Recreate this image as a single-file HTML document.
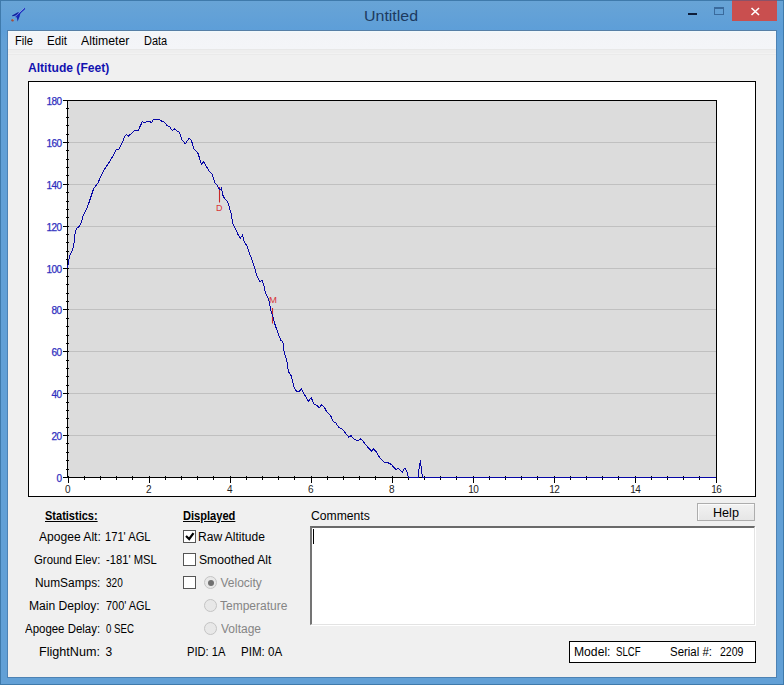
<!DOCTYPE html>
<html><head><meta charset="utf-8">
<style>
*{box-sizing:border-box;margin:0;padding:0}
html,body{width:784px;height:685px;overflow:hidden;background:#62a0d6;font-family:"Liberation Sans", sans-serif;font-size:12px;color:#000}
.a{position:absolute;white-space:nowrap;line-height:15px}
#frame{position:absolute;left:0;top:0;width:784px;height:685px;border:1px solid #3f7aab;background:linear-gradient(#68a4d6,#5d9ed8 30px,#62a0d6 40px)}
#client{position:absolute;left:7px;top:30px;width:770px;height:648px;border:1px solid #4d82b4;border-top-color:#577fa6;background:#f0f0f0}
#menu{position:absolute;left:8px;top:31px;width:768px;height:19px;background:linear-gradient(#f0fafe 0px,#f3f4f7 2px,#f4f5f8);border-bottom:1px solid #e8e8e8}
.cb{position:absolute;width:13px;height:13px;border:1px solid #555;background:#fff}
.rb{position:absolute;width:13px;height:13px;border:1px solid #c4c4c4;border-radius:50%;background:#e8e8e8}
</style></head><body>
<div id="frame"></div>
<svg style="position:absolute;left:0;top:0" width="40" height="30" viewBox="0 0 40 30">
 <path d="M12 15.4 L18.4 12 L19 13.4 L16 15.4 L12.4 16.2 Z" fill="#0e1e9c"/>
 <path d="M18.2 13.8 L20.4 13 L19.6 16.6 L17.6 21.6 L16.8 17.2 Z" fill="#1426b4"/>
 <path d="M24.4 7.8 L25.2 9 L16 17.6 L14.8 16.6 Z" fill="#1a2cc0"/>
 <line x1="24" y1="8.2" x2="14.9" y2="16.8" stroke="#d8ecff" stroke-width="0.6" opacity="0.8"/>
 <circle cx="12.6" cy="20.3" r="1.2" fill="#9c4636"/>
 <circle cx="13.1" cy="19.8" r="0.5" fill="#f4c8a8"/>
</svg>
<div style="position:absolute;left:688px;top:13px;width:9px;height:2px;background:#0e1e3a"></div>
<div style="position:absolute;left:714px;top:7px;width:10px;height:8px;border:1px solid #3a6a9c;border-top-width:2px"></div>
<div style="position:absolute;left:732px;top:0px;width:45px;height:21px;background:#c94f4f;border-top:1px solid #8a5268"></div>
<svg style="position:absolute;left:732px;top:0" width="45" height="21"><path d="M19.5 8 L27 15 M27 8 L19.5 15" stroke="#fff" stroke-width="1.6"/></svg>
<div id="client"></div>
<div id="menu"></div>
<div style="position:absolute;left:8px;top:50px;width:768px;height:5px;background:linear-gradient(#eeeeee 0,#eeeeee 3px,#f2f2f2 3px,#f2f2f2 4px,#eaeaea 4px)"></div>
<div style="position:absolute;left:28px;top:81px;width:728px;height:416px;border:1px solid #000;background:#fff"></div>
<svg style="position:absolute;left:0;top:0" width="784" height="685" font-family="Liberation Sans, sans-serif">
<rect x="68" y="101" width="648" height="376" fill="#dcdcdc"/>
<line x1="68" x2="716" y1="142.5" y2="142.5" stroke="#c0c0c0" stroke-width="1"/>
<line x1="68" x2="716" y1="184.5" y2="184.5" stroke="#c0c0c0" stroke-width="1"/>
<line x1="68" x2="716" y1="226.5" y2="226.5" stroke="#c0c0c0" stroke-width="1"/>
<line x1="68" x2="716" y1="268.5" y2="268.5" stroke="#c0c0c0" stroke-width="1"/>
<line x1="68" x2="716" y1="309.5" y2="309.5" stroke="#c0c0c0" stroke-width="1"/>
<line x1="68" x2="716" y1="351.5" y2="351.5" stroke="#c0c0c0" stroke-width="1"/>
<line x1="68" x2="716" y1="393.5" y2="393.5" stroke="#c0c0c0" stroke-width="1"/>
<line x1="68" x2="716" y1="435.5" y2="435.5" stroke="#c0c0c0" stroke-width="1"/>
<path d="M67 100.5 H717 M716.5 100 V483 M67.5 100 V478 M63 477.5 H717 M63 477.5 H69 M66 469.5 H69 M66 460.5 H69 M66 452.5 H69 M66 443.5 H69 M63 435.5 H69 M66 427.5 H69 M66 418.5 H69 M66 410.5 H69 M66 402.5 H69 M63 393.5 H69 M66 385.5 H69 M66 376.5 H69 M66 368.5 H69 M66 360.5 H69 M63 351.5 H69 M66 343.5 H69 M66 335.5 H69 M66 326.5 H69 M66 318.5 H69 M63 309.5 H69 M66 301.5 H69 M66 293.5 H69 M66 284.5 H69 M66 276.5 H69 M63 268.5 H69 M66 259.5 H69 M66 251.5 H69 M66 242.5 H69 M66 234.5 H69 M63 226.5 H69 M66 217.5 H69 M66 209.5 H69 M66 201.5 H69 M66 192.5 H69 M63 184.5 H69 M66 175.5 H69 M66 167.5 H69 M66 159.5 H69 M66 150.5 H69 M63 142.5 H69 M66 134.5 H69 M66 125.5 H69 M66 117.5 H69 M66 108.5 H69 M63 100.5 H69 M68.5 476 V483 M84.5 476 V480 M100.5 476 V480 M116.5 476 V480 M132.5 476 V480 M149.5 476 V483 M165.5 476 V480 M181.5 476 V480 M197.5 476 V480 M213.5 476 V480 M230.5 476 V483 M246.5 476 V480 M262.5 476 V480 M278.5 476 V480 M294.5 476 V480 M311.5 476 V483 M327.5 476 V480 M343.5 476 V480 M359.5 476 V480 M375.5 476 V480 M392.5 476 V483 M408.5 476 V480 M424.5 476 V480 M440.5 476 V480 M456.5 476 V480 M473.5 476 V483 M489.5 476 V480 M505.5 476 V480 M521.5 476 V480 M537.5 476 V480 M554.5 476 V483 M570.5 476 V480 M586.5 476 V480 M602.5 476 V480 M618.5 476 V480 M635.5 476 V483 M651.5 476 V480 M667.5 476 V480 M683.5 476 V480 M699.5 476 V480 M716.5 476 V483" stroke="#000" stroke-width="1" fill="none"/>
<text x="61.6" y="482.0" text-anchor="end" font-size="10" fill="#3030c0" stroke="#3030c0" stroke-width="0.25" letter-spacing="-0.55">0</text>
<text x="61.6" y="440.0" text-anchor="end" font-size="10" fill="#3030c0" stroke="#3030c0" stroke-width="0.25" letter-spacing="-0.55">20</text>
<text x="61.6" y="398.0" text-anchor="end" font-size="10" fill="#3030c0" stroke="#3030c0" stroke-width="0.25" letter-spacing="-0.55">40</text>
<text x="61.6" y="356.0" text-anchor="end" font-size="10" fill="#3030c0" stroke="#3030c0" stroke-width="0.25" letter-spacing="-0.55">60</text>
<text x="61.6" y="314.0" text-anchor="end" font-size="10" fill="#3030c0" stroke="#3030c0" stroke-width="0.25" letter-spacing="-0.55">80</text>
<text x="61.6" y="273.0" text-anchor="end" font-size="10" fill="#3030c0" stroke="#3030c0" stroke-width="0.25" letter-spacing="-0.55">100</text>
<text x="61.6" y="231.0" text-anchor="end" font-size="10" fill="#3030c0" stroke="#3030c0" stroke-width="0.25" letter-spacing="-0.55">120</text>
<text x="61.6" y="189.0" text-anchor="end" font-size="10" fill="#3030c0" stroke="#3030c0" stroke-width="0.25" letter-spacing="-0.55">140</text>
<text x="61.6" y="147.0" text-anchor="end" font-size="10" fill="#3030c0" stroke="#3030c0" stroke-width="0.25" letter-spacing="-0.55">160</text>
<text x="61.6" y="105.0" text-anchor="end" font-size="10" fill="#3030c0" stroke="#3030c0" stroke-width="0.25" letter-spacing="-0.55">180</text>
<text x="67.4" y="493" text-anchor="middle" font-size="10" fill="#222" letter-spacing="-0.55">0</text>
<text x="148.4" y="493" text-anchor="middle" font-size="10" fill="#222" letter-spacing="-0.55">2</text>
<text x="229.4" y="493" text-anchor="middle" font-size="10" fill="#222" letter-spacing="-0.55">4</text>
<text x="310.4" y="493" text-anchor="middle" font-size="10" fill="#222" letter-spacing="-0.55">6</text>
<text x="391.4" y="493" text-anchor="middle" font-size="10" fill="#222" letter-spacing="-0.55">8</text>
<text x="473.2" y="493" text-anchor="middle" font-size="10" fill="#222" letter-spacing="-0.55">10</text>
<text x="554.2" y="493" text-anchor="middle" font-size="10" fill="#222" letter-spacing="-0.55">12</text>
<text x="635.2" y="493" text-anchor="middle" font-size="10" fill="#222" letter-spacing="-0.55">14</text>
<text x="716.2" y="493" text-anchor="middle" font-size="10" fill="#222" letter-spacing="-0.55">16</text>
<line x1="219.5" x2="219.5" y1="187" y2="202.5" stroke="#c82828" stroke-width="1.1"/>
<text x="219.2" y="211.2" text-anchor="middle" font-size="9" fill="#d83636">D</text>
<line x1="272.5" x2="272.5" y1="308" y2="323.5" stroke="#c82828" stroke-width="1.1"/>
<text x="273" y="302.6" text-anchor="middle" font-size="9.5" fill="#d83636">M</text>
<polyline points="67.6,267.6 69,258.8 70.2,254.5 72.4,250 73.9,244.2 75.3,231.1 76.8,228.2 79,226.7 81.2,223 83.4,215 85.5,210.7 87.7,206.3 90.7,197.5 93.6,188.8 95.8,185.8 97.9,183 100.3,177.7 104.3,169.6 109,162.6 112.5,156.7 116,149.7 118.9,149.1 123,141 124.8,136.3 126.3,134.5 128.3,136.3 134.7,130.4 138.4,130.1 142.3,121.7 144.6,122.8 147,121.3 149.3,121.3 151.6,122.8 153.4,119.6 158.6,119.3 161.6,121.1 163.9,121.7 167.4,125.8 169.7,126.9 172.1,130.4 175,128.8 177,131.1 179.3,132.3 181.7,139.3 185.2,143.9 189.3,138.1 191.6,141 193.9,149.2 196.3,151.5 198,153.3 201.5,164.4 203.3,161.5 205.6,165 209.7,172 212,173.7 215,183.1 217.5,185.8 218.7,188.2 220.1,190.2 221.6,188.2 222.8,195.2 223.9,197.5 227.4,201.6 229.2,206.9 231.5,215 232.6,223 235.5,228.9 238.4,235.3 240.2,238.2 242.5,235.3 244.3,241.7 247.2,246.4 249.5,253.4 253,262.7 257,275.8 259.9,281.7 262.3,280.5 264,286.4 265.2,292.2 268.7,299.2 270.4,308.5 272.8,316.7 275.1,324.9 278,333.1 281,340.7 282.7,341.2 284.3,352.8 286.7,359.9 288.4,371.5 291.4,376.2 294.3,387.9 296.6,391.4 299,391.4 301.3,389.1 303.6,393.1 308.3,401.3 311.2,397.8 314.1,404.2 317,405.4 319.4,407.7 321.7,404.8 324.6,407.7 326.4,411.2 330.7,415.9 333.3,421.7 335.8,423 339,427.4 341.6,428.7 344.1,431.3 348.6,437 351.1,435.7 353.7,438.9 357.5,440.8 360.7,438.9 363.3,441.5 367.7,447.2 371.6,451 373.5,449.1 376.7,452.3 379.8,458 383.7,461.9 387.5,462.5 391.3,464.4 395.8,469.5 398.3,468.2 402.2,472.1 404.7,468.2 406.6,470.8 408.5,477.2 418.4,477.2 418.4,473.4 420.4,460.2 421.9,473.4 422.4,477.2 715.5,477.2" fill="none" stroke="#0606a6" stroke-width="1" stroke-linejoin="miter" shape-rendering="crispEdges"/>
</svg>
<div class="cb" style="left:183px;top:530px"></div>
<svg style="position:absolute;left:183px;top:530px" width="13" height="13"><path d="M3 6 L6.2 9 L10.5 3.2" fill="none" stroke="#000" stroke-width="2.2"/></svg>
<div class="cb" style="left:183px;top:553px"></div>
<div class="cb" style="left:183px;top:576px"></div>
<div class="rb" style="left:204px;top:576px"></div>
<div style="position:absolute;left:207.5px;top:579.5px;width:6px;height:6px;border-radius:50%;background:#707070"></div>
<div class="rb" style="left:204px;top:599px"></div>
<div class="rb" style="left:204px;top:622px"></div>
<div style="position:absolute;left:310px;top:526px;width:445px;height:99px;border-top:2px solid #6a6a6a;border-left:2px solid #747474;border-right:1px solid #e3e3e3;border-bottom:1px solid #e3e3e3;background:#fff;box-shadow:1px 1px 0 #fff"></div>
<div style="position:absolute;left:313px;top:529px;width:1px;height:15px;background:#000"></div>
<div style="position:absolute;left:697px;top:503px;width:58px;height:18px;border:1px solid #adadad;background:linear-gradient(#f2f2f2,#e6e6e6);box-shadow:inset 1px 1px 0 #fbfbfb"></div>
<div style="position:absolute;left:569px;top:641px;width:187px;height:22px;border:1px solid #000;background:#fff"></div>
<div class="a" id="t_file" style="left:15.02px;top:34px;transform:scaleX(0.9306);transform-origin:0 0;">File</div>
<div class="a" id="t_edit" style="left:46.93px;top:34px;transform:scaleX(0.9663);transform-origin:0 0;">Edit</div>
<div class="a" id="t_alt" style="left:81.0px;top:34px;transform:scaleX(1.0210);transform-origin:0 0;">Altimeter</div>
<div class="a" id="t_data" style="left:144.05px;top:34px;transform:scaleX(0.9126);transform-origin:0 0;">Data</div>
<div class="a" id="t_title" style="left:364.4px;top:8px;transform:scaleX(1.0627);transform-origin:0 0;font-size:15px;color:#1c3a60">Untitled</div>
<div class="a" id="t_altfeet" style="left:28.0px;top:61px;transform:scaleX(1.0076);transform-origin:0 0;font-weight:bold;color:#1212b0">Altitude (Feet)</div>
<div class="a" id="t_stats" style="left:45.49px;top:508.5px;transform:scaleX(0.9173);transform-origin:0 0;font-weight:bold;text-decoration:underline">Statistics:</div>
<div class="a" id="t_disp" style="left:183.48px;top:509px;transform:scaleX(0.9229);transform-origin:0 0;font-weight:bold;text-decoration:underline">Displayed</div>
<div class="a" id="t_comm" style="left:310.5px;top:509px;transform:scaleX(1.0139);transform-origin:0 0;">Comments</div>
<div class="a" id="t_help" style="left:712.74px;top:506px;transform:scaleX(1.0510);transform-origin:0 0;">Help</div>
<div class="a" id="l1" style="left:39.0px;top:530.1px;transform:scaleX(1.0067);transform-origin:0 0;">Apogee Alt:</div>
<div class="a" id="l2" style="left:34.02px;top:553.1px;transform:scaleX(0.9478);transform-origin:0 0;">Ground Elev:</div>
<div class="a" id="l3" style="left:34.51px;top:576.1px;transform:scaleX(0.9908);transform-origin:0 0;">NumSamps:</div>
<div class="a" id="l4" style="left:29.48px;top:599.1px;transform:scaleX(1.0088);transform-origin:0 0;">Main Deploy:</div>
<div class="a" id="l5" style="left:24.97px;top:622.1px;transform:scaleX(0.9546);transform-origin:0 0;">Apogee Delay:</div>
<div class="a" id="l6" style="left:39.47px;top:645.1px;transform:scaleX(1.0494);transform-origin:0 0;">FlightNum:</div>
<div class="a" id="v1" style="left:104.54px;top:530.1px;transform:scaleX(0.9294);transform-origin:0 0;">171' AGL</div>
<div class="a" id="v2" style="left:105.54px;top:553.1px;transform:scaleX(0.9336);transform-origin:0 0;">-181' MSL</div>
<div class="a" id="v3" style="left:105.54px;top:576.1px;transform:scaleX(0.8361);transform-origin:0 0;">320</div>
<div class="a" id="v4" style="left:105.55px;top:599.1px;transform:scaleX(0.9087);transform-origin:0 0;">700' AGL</div>
<div class="a" id="v5" style="left:105.58px;top:622.1px;transform:scaleX(0.8063);transform-origin:0 0;">0 SEC</div>
<div class="a" id="v6" style="left:105.5px;top:645.1px;transform:scaleX(1.0000);transform-origin:0 0;">3</div>
<div class="a" id="c1" style="left:198.49px;top:530.1px;transform:scaleX(1.0032);transform-origin:0 0;">Raw Altitude</div>
<div class="a" id="c2" style="left:198.5px;top:553.1px;transform:scaleX(1.0141);transform-origin:0 0;">Smoothed Alt</div>
<div class="a" id="r1" style="left:220.5px;top:576.1px;transform:scaleX(1.0000);transform-origin:0 0;color:#858585">Velocity</div>
<div class="a" id="r2" style="left:220.49px;top:599.1px;transform:scaleX(1.0003);transform-origin:0 0;color:#858585">Temperature</div>
<div class="a" id="r3" style="left:220.5px;top:622.1px;transform:scaleX(1.0002);transform-origin:0 0;color:#858585">Voltage</div>
<div class="a" id="pid" style="left:186.59px;top:645px;transform:scaleX(0.9302);transform-origin:0 0;">PID: 1A</div>
<div class="a" id="pim" style="left:240.97px;top:645px;transform:scaleX(0.9638);transform-origin:0 0;">PIM: 0A</div>
<div class="a" id="model" style="left:573.5px;top:645px;transform:scaleX(1.0123);transform-origin:0 0;">Model:</div>
<div class="a" id="slcf" style="left:616.1px;top:645px;transform:scaleX(0.8012);transform-origin:0 0;">SLCF</div>
<div class="a" id="serial" style="left:670.01px;top:645px;transform:scaleX(0.9541);transform-origin:0 0;">Serial #:</div>
<div class="a" id="sn" style="left:719.56px;top:645px;transform:scaleX(0.8777);transform-origin:0 0;">2209</div>
</body></html>
